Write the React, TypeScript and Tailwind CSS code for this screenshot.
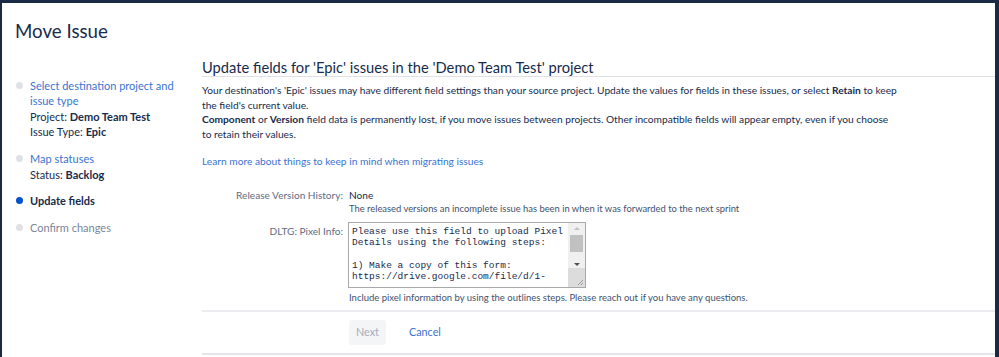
const steps = [
  {
    title: ['Select destination project and', 'issue type'],
    link: true,
    details: [
      ['Project:', 'Demo Team Test'],
      ['Issue Type:', 'Epic'],
    ],
  },
  { title: ['Map statuses'], link: true, details: [['Status:', 'Backlog']] },
  { title: ['Update fields'], active: true, details: [] },
  { title: ['Confirm changes'], muted: true, details: [] },
];

function StepNav() {
  return (
    <ol className="flex flex-col gap-[11.5px] pl-[14px] text-[11px] leading-[15.4px]">
      {steps.map((s) => (
        <li key={s.title[0]} className="flex gap-[7px]">
          <span
            className={`mt-[4px] h-[7px] w-[7px] shrink-0 rounded-full ${
              s.active ? 'bg-[#0052cc]' : 'bg-[#dfe1e6]'
            }`}
          />
          <div className="whitespace-nowrap">
            {s.title.map((line) => (
              <div
                key={line}
                className={
                  s.active
                    ? 'font-bold text-[#172b4d]'
                    : s.muted
                      ? 'text-[#7a869a]'
                      : 'text-[#3b73d0]'
                }
              >
                {line}
              </div>
            ))}
            {s.details.map(([k, v]) => (
              <div key={k} className="text-[#172b4d]">
                {k} <b>{v}</b>
              </div>
            ))}
          </div>
        </li>
      ))}
    </ol>
  );
}

function FakeTextarea() {
  return (
    <div className="-ml-[1px] flex h-[66px] w-[238px] border border-[#a9a9a9] bg-white">
      <div className="flex-1 overflow-hidden whitespace-pre px-[3px] pt-[3px] font-['Liberation_Mono',monospace] text-[9.5px] leading-[11.2px] text-[#172b4d]">
        {'Please use this field to upload Pixel\nDetails using the following steps:\n\n1) Make a copy of this form:\nhttps://drive.google.com/file/d/1-'}
      </div>
      <div className="flex w-[17px] flex-col bg-[#f0f0f0]">
        <div className="flex h-[12px] items-center justify-center">
          <span className="h-0 w-0 border-x-[3px] border-b-[3px] border-x-transparent border-b-[#c2c2c2]" />
        </div>
        <div className="mx-[2px] h-[17px] bg-[#c1c1c1]" />
        <div className="flex h-[16px] items-end justify-center pb-[2px]">
          <span className="h-0 w-0 border-x-[3px] border-t-[3px] border-x-transparent border-t-[#505050]" />
        </div>
        <div className="flex flex-1 items-end justify-end bg-[#dcdcdc] p-[1px]">
          <svg width="7" height="7" viewBox="0 0 7 7">
            <path d="M6 1L1 6M6 4L4 6" stroke="#9a9a9a" strokeWidth="1" />
          </svg>
        </div>
      </div>
    </div>
  );
}

export default function App() {
  return (
    <div className="h-[357px] w-[999px] overflow-hidden bg-[#1b2a44] pl-[2px] pr-[4px] pt-[3px] font-['Lato',sans-serif]">
      <div className="h-full bg-white">
        <h1 className="pl-[13px] pt-[15px] text-[18.7px] leading-[26px] text-[#172b4d]">Move Issue</h1>
        <div className="mt-[14px] flex">
          <div className="w-[200px] pt-[20px]">
            <StepNav />
          </div>
          <div className="flex-1">
            <h2 className="whitespace-nowrap border-b border-[#dfe1e6] text-[14.7px] leading-[18px] text-[#172b4d]">
              Update fields for 'Epic' issues in the 'Demo Team Test' project
            </h2>
            <div className="mt-[6px] whitespace-nowrap text-[10.2px] leading-[14.6px] text-[#172b4d]">
              <p>
                Your destination's 'Epic' issues may have different field settings than your source project. Update
                the values for fields in these issues, or select <b>Retain</b> to keep
                <br />
                the field's current value.
              </p>
              <p>
                <b>Component</b> or <b>Version</b> field data is permanently lost, if you move issues between projects.
                Other incompatible fields will appear empty, even if you choose
                <br />
                to retain their values.
              </p>
              <p className="mt-[13px] text-[#3b73d0]">Learn more about things to keep in mind when migrating issues</p>
            </div>
            <div className="mt-[19px] grid grid-cols-[141px_1fr] gap-x-[6px] whitespace-nowrap text-[10.1px] leading-[14px]">
              <div className="text-right text-[#5e6c84]">Release Version History:</div>
              <div>
                <div className="text-[#172b4d]">None</div>
                <div className="text-[9.4px] leading-[14px] text-[#42526e]">
                  The released versions an incomplete issue has been in when it was forwarded to the next sprint
                </div>
              </div>
              <div className="mt-[8px] text-right text-[#5e6c84]">DLTG: Pixel Info:</div>
              <div className="mt-[6px]">
                <FakeTextarea />
                <div className="mt-[3px] text-[9.5px] leading-[14px] text-[#42526e]">
                  Include pixel information by using the outlines steps. Please reach out if you have any questions.
                </div>
              </div>
            </div>
            <div className="mt-[5px] flex gap-[13px] border-t-2 border-[#ebecf0] pb-[8px] pl-[147px] pt-[8px] text-[10.8px]">
              <button className="h-[25px] rounded-[3px] bg-[#f4f5f7] px-[7px] text-[#a5adba]">Next</button>
              <button className="h-[25px] px-[10px] text-[#3b73d0]">Cancel</button>
            </div>
            <div className="h-[2px] bg-[#e4e5e8]" />
          </div>
        </div>
      </div>
    </div>
  );
}
